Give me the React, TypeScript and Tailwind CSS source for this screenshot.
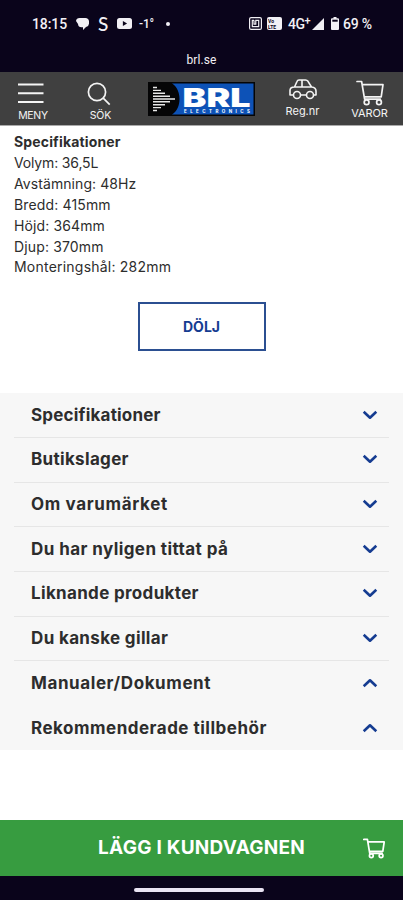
import clsx from 'clsx';

interface Section {
    title: string;
    open: boolean;
    tracking: string;
}

const specs = [
    { text: 'Volym: 36,5L', tracking: 'tracking-[-0.15px]' },
    { text: 'Avstämning: 48Hz', tracking: 'tracking-[0.08px]' },
    { text: 'Bredd: 415mm', tracking: 'tracking-[0.15px]' },
    { text: 'Höjd: 364mm', tracking: 'tracking-[0.12px]' },
    { text: 'Djup: 370mm', tracking: 'tracking-[0.15px]' },
    { text: 'Monteringshål: 282mm', tracking: 'tracking-[0.22px]' },
];

const sections: Section[] = [
    { title: 'Specifikationer', open: false, tracking: 'tracking-[0.2px]' },
    { title: 'Butikslager', open: false, tracking: 'tracking-[0.32px]' },
    { title: 'Om varumärket', open: false, tracking: 'tracking-[0.65px]' },
    { title: 'Du har nyligen tittat på', open: false, tracking: 'tracking-[0.42px]' },
    { title: 'Liknande produkter', open: false, tracking: 'tracking-[0.33px]' },
    { title: 'Du kanske gillar', open: false, tracking: 'tracking-[0.35px]' },
    { title: 'Manualer/Dokument', open: true, tracking: 'tracking-[0.59px]' },
    { title: 'Rekommenderade tillbehör', open: true, tracking: 'tracking-[0.5px]' },
];

function CartIcon({ className }: { className?: string }) {
    return (
        <svg viewBox="0 0 28 26" className={className} fill="none" stroke="currentColor" strokeLinejoin="round" strokeLinecap="round">
            <path d="M1 1.5h4.6l3 17.7M6.3 4.7H27l-1.8 12.1H8.3M8.8 19.2h15.5" />
            <circle cx="10.6" cy="22.2" r="2.4" />
            <circle cx="23" cy="22.2" r="2.4" />
        </svg>
    );
}

function Chevron({ up }: { up: boolean }) {
    return (
        <svg viewBox="0 0 16 10" className={clsx('h-[10px] w-4', up && 'rotate-180')} fill="none" stroke="#153c91" strokeWidth="2.6" strokeLinejoin="round">
            <path d="m1.7 1.7 6.3 6 6.3-6" />
        </svg>
    );
}

function StatusBar() {
    return (
        <div className="h-[72px] bg-[#0a041b] font-[Roboto,sans-serif] text-[#f2f0f5]">
            <div className="flex h-[47px] items-center pl-8 text-sm font-medium">
                <span className="w-[35px] tracking-[-0.1px]">18:15</span>
                <svg viewBox="0 0 13 12" className="ml-[9px] h-3 w-[13px]" fill="currentColor">
                    <path d="M3.6 0h5.8A3.6 3.6 0 0 1 13 3.8v2A3.6 3.6 0 0 1 10 9L7 12V9.3H5.5A3.6 3.6 0 0 1 2 6L0 3C.2 1 1.5 0 3.6 0Z" />
                </svg>
                <span className="ml-[9px] w-[11px] font-[Lato,sans-serif] text-[19px] leading-none">S</span>
                <svg viewBox="0 0 15 11" className="ml-2 h-[11px] w-[15px]">
                    <rect width="15" height="11" rx="2.5" fill="currentColor" />
                    <path d="m5.9 3 4.2 2.5-4.2 2.5Z" fill="#0a041b" />
                </svg>
                <span className="ml-[7px] w-[16px] text-xs tracking-[-0.2px] whitespace-nowrap">-1°</span>
                <span className="ml-[11px] size-1 rounded-full bg-current" />
                <svg viewBox="0 0 13 13" className="ml-[79px] size-[13px]" fill="none" stroke="currentColor" strokeWidth="1.2">
                    <rect x=".6" y=".6" width="11.8" height="11.8" rx="1.5" />
                    <path d="M5 3.3H3.3v6.4h6.4V3.3H6.8v3.9H5V3.3" />
                </svg>
                <span className="ml-[5px] flex h-[13px] w-[15px] flex-col justify-center rounded-xs bg-current pl-px text-[5px]/[6px] font-bold">
                    <span className="text-[#0a041b]">Vo</span>
                    <span className="text-[#0a041b]">LTE</span>
                </span>
                <span className="ml-[6px] flex w-[22px] text-sm tracking-[-0.5px] whitespace-nowrap">
                    4G<span className="-mt-px text-[11px]/4">+</span>
                </span>
                <svg viewBox="0 0 12 12" className="ml-[2px] size-3" fill="currentColor">
                    <path d="M12 0v12H0Z" />
                </svg>
                <svg viewBox="0 0 8 13" className="ml-[7px] h-[13px] w-2" fill="currentColor">
                    <path d="M2.5 0h3v1.3H7a1 1 0 0 1 1 1V12a1 1 0 0 1-1 1H1a1 1 0 0 1-1-1V2.3a1 1 0 0 1 1-1h1.5Z" />
                    <path d="M1.3 2.7h5.4v2H1.3Z" fill="#0a041b" />
                </svg>
                <span className="ml-[4px] tracking-[-0.2px] whitespace-nowrap">69 %</span>
            </div>
            <div className="text-center text-xs leading-[26px] tracking-[0.1px]">brl.se</div>
        </div>
    );
}

function Logo() {
    return (
        <svg viewBox="0 0 107 34" className="h-[34px] w-[107px]">
            <rect width="107" height="34" fill="#050506" />
            <path d="M24 1.5h81.500v31H24c5-3 7.500-9 7.500-15.500S29 4.500 24 1.500Z" fill="#0d52b7" />
            <path d="M5 5.500h4M5 8.400h8M5 11.300h12M5 14.200h17M5 17h22M5 19.800h17M5 22.700h12M5 25.600h8M5 28.500h4" stroke="#e8e8e8" strokeWidth="1.4" />
            <text x="34.5" y="24.5" textLength="68" lengthAdjust="spacingAndGlyphs" fill="#fff" className="font-[Inter,sans-serif] text-[26px] font-black">BRL</text>
            <text x="36" y="30.5" textLength="66" fill="#fff" className="font-[Inter,sans-serif] text-[4.5px] font-bold">ELECTRONICS</text>
        </svg>
    );
}

function Header() {
    return (
        <header className="flex h-[54px] border-b border-[#aaa] bg-[#404040] text-[11px] leading-4 text-[#f4f4f4]">
            <div className="flex w-[66px] flex-col items-center pt-[11px]">
                <svg viewBox="0 0 26 21" className="h-[21px] w-[26px] -translate-x-[2px]" stroke="currentColor" strokeWidth="2">
                    <path d="M0 1.500h25.500M0 10.300h25.500M0 19h25.500" />
                </svg>
                <span className="mt-[4px] text-[10.5px] tracking-[-0.3px]">MENY</span>
            </div>
            <div className="flex w-[69px] flex-col items-center pt-[10px]">
                <svg viewBox="0 0 24 24" className="size-6 -translate-x-[2px]" fill="none" stroke="currentColor" strokeWidth="1.7">
                    <circle cx="10" cy="10" r="8.6" />
                    <path d="m16.2 16.2 6.500 6.500" />
                </svg>
                <span className="mt-[2px] text-[10.5px] tracking-[-0.1px]">SÖK</span>
            </div>
            <div className="ml-[13px] w-[107px] pt-[10px]">
                <Logo />
            </div>
            <div className="ml-[14px] flex w-[67px] flex-col items-center pt-[7px]">
                <svg viewBox="0 0 28 21" className="h-[21px] w-7" fill="none" stroke="currentColor" strokeWidth="1.6" strokeLinejoin="round">
                    <path d="M4.5 16H1v-4.500C1 9 2.500 8 5.500 8L8 2.500Q8.500 1 10 1h6.500Q18 1 19 2.300L22.500 8c3.200.3 4.500 1.500 4.500 4v4h-2.500M11.500 16h6M5.500 8h17M13 1v7" />
                    <circle cx="8" cy="16" r="3.5" />
                    <circle cx="21" cy="16" r="3.5" />
                </svg>
                <span className="mt-[3px]">Reg.nr</span>
            </div>
            <div className="flex flex-1 flex-col items-center pt-[8px]">
                <CartIcon className="h-[26px] w-7 stroke-[1.7]" />
                <span className="-mt-px tracking-[-0.1px]">VAROR</span>
            </div>
        </header>
    );
}

export default function App() {
    return (
        <div className="flex h-[900px] w-[403px] flex-col overflow-hidden bg-white font-[Inter,sans-serif] text-[#2d2d2d]">
            <StatusBar />
            <Header />
            <main className="flex-1">
                <div className="px-[14px] pt-[6px] text-sm leading-[20.9px]">
                    <h2 className="font-bold tracking-[0.15px]">Specifikationer</h2>
                    {specs.map((spec) => (
                        <p key={spec.text} className={spec.tracking}>{spec.text}</p>
                    ))}
                </div>
                <button className="mx-auto mt-[24px] block h-[49px] w-[128px] border-2 border-[#2b4f91] text-sm font-bold text-[#153c91]">DÖLJ</button>
                <div className="mt-[42px] h-[357px] bg-[#f7f7f7] px-[14px]">
                    {sections.map((section) => (
                        <div
                            key={section.title}
                            className={clsx('flex h-[44.7px] items-center justify-between border-b pr-[11px] pb-px pl-[17px]', section.open ? 'border-transparent' : 'border-[#e6e6e6]')}
                        >
                            <h3 className={clsx('text-[17px] leading-6 font-bold whitespace-nowrap', section.tracking)}>{section.title}</h3>
                            <Chevron up={section.open} />
                        </div>
                    ))}
                </div>
            </main>
            <button className="flex h-[56px] shrink-0 items-center bg-[#379c40] pl-[98px] text-white">
                <span className="w-[208px] text-left text-[19px] font-bold tracking-[0.25px] whitespace-nowrap">LÄGG I KUNDVAGNEN</span>
                <CartIcon className="ml-[57px] h-[21px] w-[22px] stroke-[2.2]" />
            </button>
            <div className="flex h-[24px] shrink-0 bg-[#0a041b] pt-[12px] pl-[134px]">
                <div className="h-[4px] w-[130px] rounded-full bg-[#e9e4f2]" />
            </div>
        </div>
    );
}
